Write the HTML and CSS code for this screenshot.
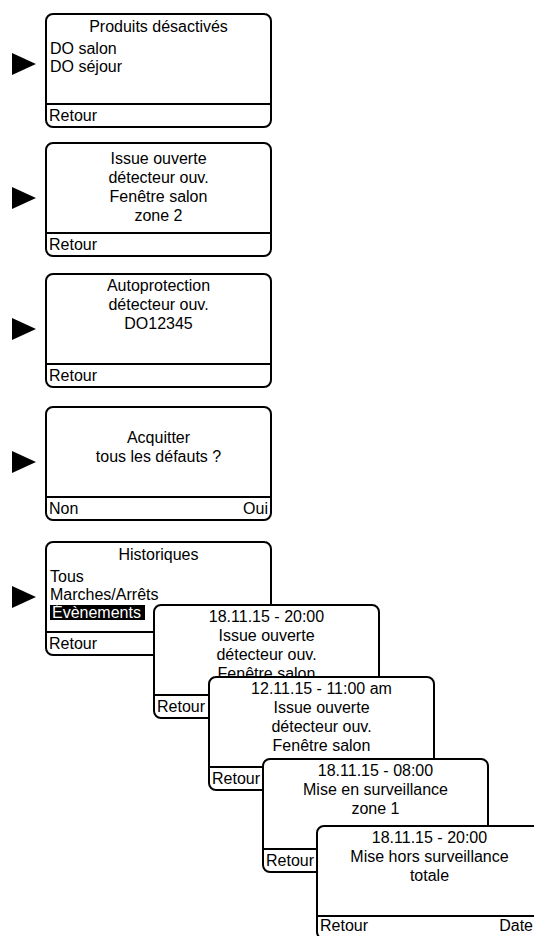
FILE: index.html
```html
<!DOCTYPE html>
<html lang="fr">
<head>
<meta charset="utf-8">
<title>Écrans</title>
<link rel="stylesheet" href="styles.css">
</head>
<body>
<div class="page">
  <div class="row row-1">
    <svg class="arrow" viewBox="0 0 24 22"><polygon points="0,0 24,11 0,22"/></svg>
    <div class="screen">
      <div class="body">
        <div class="title">Produits désactivés</div>
        <div class="list">
          <div>DO salon</div>
          <div>DO séjour</div>
        </div>
      </div>
      <div class="foot"><span>Retour</span></div>
    </div>
  </div>

  <div class="row row-2">
    <svg class="arrow" viewBox="0 0 24 22"><polygon points="0,0 24,11 0,22"/></svg>
    <div class="screen">
      <div class="body centered pad-2">
        <div>Issue ouverte</div>
        <div>détecteur ouv.</div>
        <div>Fenêtre salon</div>
        <div>zone 2</div>
      </div>
      <div class="foot"><span>Retour</span></div>
    </div>
  </div>

  <div class="row row-3">
    <svg class="arrow" viewBox="0 0 24 22"><polygon points="0,0 24,11 0,22"/></svg>
    <div class="screen">
      <div class="body centered">
        <div>Autoprotection</div>
        <div>détecteur ouv.</div>
        <div>DO12345</div>
      </div>
      <div class="foot"><span>Retour</span></div>
    </div>
  </div>

  <div class="row row-4">
    <svg class="arrow" viewBox="0 0 24 22"><polygon points="0,0 24,11 0,22"/></svg>
    <div class="screen">
      <div class="body centered pad-4">
        <div>Acquitter</div>
        <div>tous les défauts ?</div>
      </div>
      <div class="foot"><span>Non</span><span>Oui</span></div>
    </div>
  </div>

  <div class="row row-5">
    <svg class="arrow" viewBox="0 0 24 22"><polygon points="0,0 24,11 0,22"/></svg>
    <div class="screen">
      <div class="body">
        <div class="title">Historiques</div>
        <div class="list">
          <div>Tous</div>
          <div>Marches/Arrêts</div>
          <div><span class="selected">Évènements</span></div>
        </div>
      </div>
      <div class="foot"><span>Retour</span></div>
    </div>

    <div class="screen card card-1">
      <div class="body centered">
        <div>18.11.15 - 20:00</div>
        <div>Issue ouverte</div>
        <div>détecteur ouv.</div>
        <div>Fenêtre salon</div>
      </div>
      <div class="foot"><span>Retour</span></div>
    </div>
    <div class="screen card card-2">
      <div class="body centered">
        <div>12.11.15 - 11:00 am</div>
        <div>Issue ouverte</div>
        <div>détecteur ouv.</div>
        <div>Fenêtre salon</div>
      </div>
      <div class="foot"><span>Retour</span></div>
    </div>
    <div class="screen card card-3">
      <div class="body centered">
        <div>18.11.15 - 08:00</div>
        <div>Mise en surveillance</div>
        <div>zone 1</div>
      </div>
      <div class="foot"><span>Retour</span></div>
    </div>
    <div class="screen card card-4">
      <div class="body centered">
        <div>18.11.15 - 20:00</div>
        <div>Mise hors surveillance</div>
        <div>totale</div>
      </div>
      <div class="foot foot-last"><span>Retour</span><span>Date</span></div>
    </div>
  </div>
</div>
</body>
</html>
```

FILE: styles.css
```css
html, body {
  margin: 0;
  padding: 0;
  background: #ffffff;
  overflow: hidden;
  width: 534px;
  height: 936px;
}

body {
  font-family: "Liberation Sans", Arial, sans-serif;
  font-size: 16px;
  color: #000;
}

.page {
  display: flex;
  flex-direction: column;
  padding-top: 13px;
}

.row {
  display: flex;
  align-items: center;
  gap: 9px;
  padding-left: 12px;
}

.row-2 { margin-top: 14px; }
.row-3 { margin-top: 16px; }
.row-4 { margin-top: 18px; }
.row-5 { margin-top: 20px; position: relative; }

.arrow {
  width: 24px;
  height: 22px;
  flex: none;
  margin-bottom: 4px;
}
.row-1 .arrow { margin-bottom: 14px; }

.arrow polygon { fill: #000; }

.screen {
  box-sizing: border-box;
  width: 227px;
  height: 115px;
  border: 2px solid #000;
  border-radius: 8px;
  background: #fff;
  display: flex;
  flex-direction: column;
  overflow: hidden;
  flex: none;
}

.body {
  height: 88px;
  flex: none;
  padding: 2px 3px 0;
  box-sizing: border-box;
  line-height: 19px;
}

.body.centered {
  text-align: center;
  padding-top: 1px;
}
.body.pad-2 { padding-top: 5px; }
.body.pad-4 { padding-top: 20px; }

.title {
  text-align: center;
  line-height: 19px;
}

.list {
  margin-top: 4px;
  line-height: 18px;
}

.selected {
  display: inline-block;
  background: #000;
  color: #fff;
  line-height: 15px;
  height: 15px;
  padding: 0 4px 0 2px;
  margin-left: 0;
}

.foot {
  border-top: 2px solid #000;
  flex: 1;
  display: flex;
  justify-content: space-between;
  align-items: flex-start;
  padding: 1px 2px 0;
  line-height: 20px;
}

.foot-last {
  padding-top: 0;
  padding-right: 8px;
  line-height: 18px;
}

.card {
  position: absolute;
}
.card-1 { left: 153px; top: 63px; }
.card-2 { left: 208px; top: 135px; }
.card-3 { left: 262px; top: 217px; }
.card-4 { left: 316px; top: 284px; }
```
